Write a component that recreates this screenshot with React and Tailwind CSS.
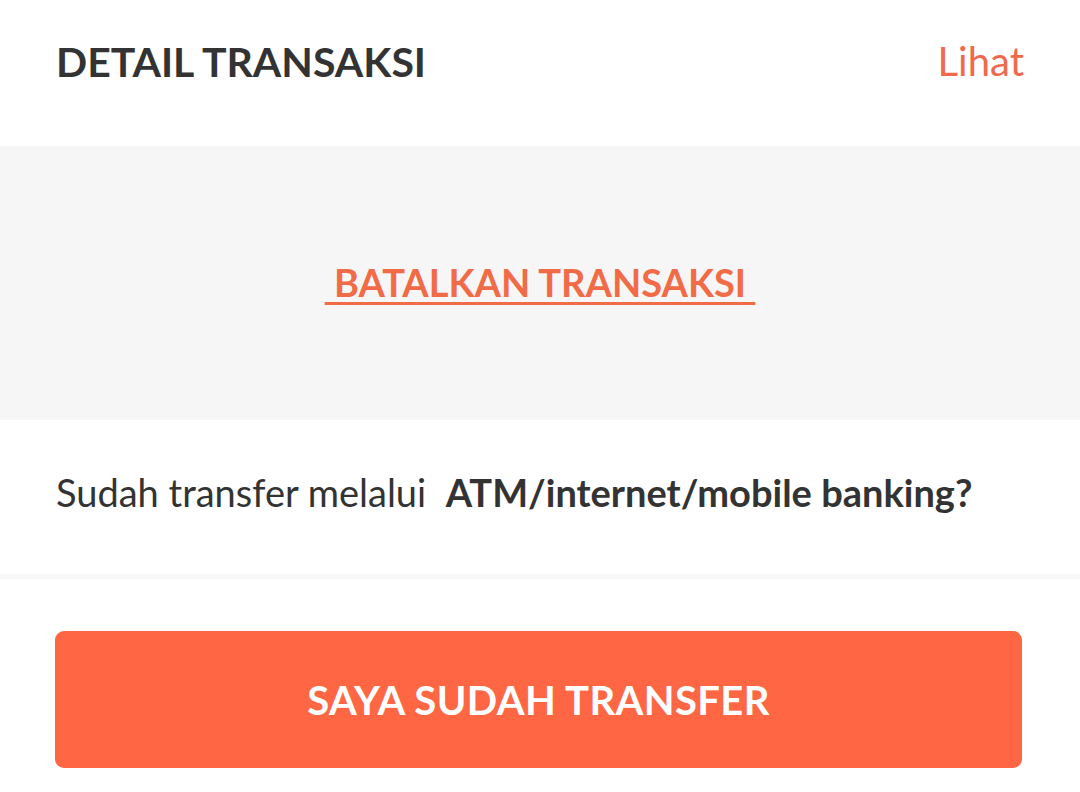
export default function App() {
  return (
    <div className="w-[1080px] h-[792px] bg-white overflow-hidden" style={{ fontFamily: "Lato, 'Noto Sans', sans-serif" }}>
      {/* header */}
      <div className="h-[146px] flex items-center justify-between pl-[56px] pr-[56px] pb-[24px]">
        <h1 className="text-[41px] font-bold text-[#333333] leading-none">DETAIL TRANSAKSI</h1>
        <span className="text-[40px] text-[#ef6a4c] leading-none">Lihat</span>
      </div>

      {/* cancel */}
      <div className="h-[274px] bg-[#f6f6f6] flex items-center justify-center pb-[2px]">
        <a className="text-[38px] font-bold text-[#f26b47] underline decoration-[3px] underline-offset-[5px] leading-none whitespace-pre">
          {" BATALKAN TRANSAKSI "}
        </a>
      </div>

      {/* question */}
      <div className="h-[154px] flex items-center pl-[56px] pb-[10px]">
        <p className="text-[38px] text-[#333333] leading-none whitespace-pre">
          {"Sudah transfer melalui  "}
          <span className="font-bold">ATM/internet/mobile banking?</span>
        </p>
      </div>

      {/* footer */}
      <div className="h-[218px] border-t-[5px] border-[#f7f7f7] px-[55px] pt-[52px]">
        <button className="w-[967px] h-[137px] rounded-[9px] bg-[#fe6644] flex items-center justify-center">
          <span className="text-[40px] font-bold text-white leading-none tracking-[0.4px]">SAYA SUDAH TRANSFER</span>
        </button>
      </div>
    </div>
  );
}
